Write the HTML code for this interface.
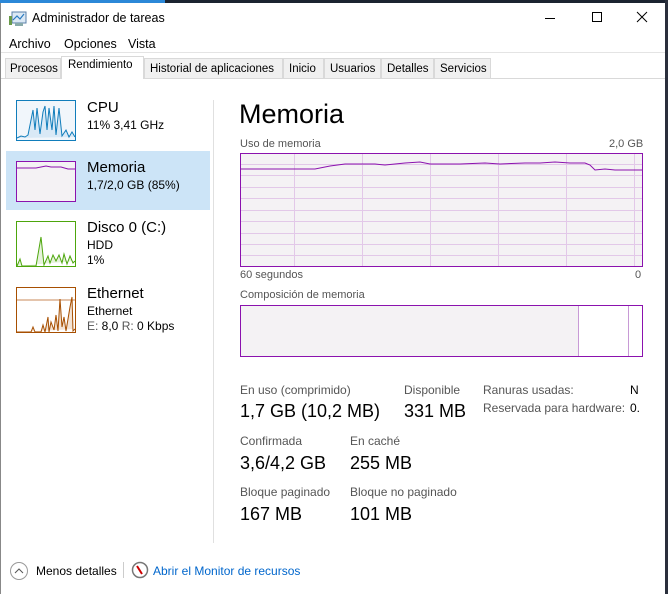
<!DOCTYPE html>
<html><head><meta charset="utf-8"><style>
*{margin:0;padding:0;box-sizing:border-box}
body{width:668px;height:594px;position:relative;overflow:hidden;background:#fff;font-family:"Liberation Sans",sans-serif;color:#000}
.a{position:absolute;white-space:nowrap}
.g{color:#555}
.t{font-size:11.5px !important}
</style></head><body>
<div class="a" style="left:0;top:0;width:668px;height:3px;background:#1b2330"></div>
<div class="a" style="left:0;top:0;width:165px;height:3px;background:#2b88d8"></div>
<div class="a" style="left:665px;top:0;width:3px;height:594px;background:#2a2f3c"></div>
<div class="a" style="left:0;top:3px;width:1px;height:591px;background:#888"></div>
<svg class="a" style="left:9px;top:11px" width="18" height="16"><rect x="3" y="1" width="14" height="11" fill="#dbe8f4" stroke="#5a7fa8"/><polyline points="4,9 8,5 11,8 15,3" fill="none" stroke="#2a7ac0" stroke-width="1.2"/><rect x="0" y="5" width="3" height="9" fill="#6a9a4a"/><rect x="6" y="12" width="8" height="3" fill="#8aa"/></svg>
<div class="a" style="left:32px;top:11px;font-size:12.5px">Administrador de tareas</div>
<div class="a" style="left:545px;top:18px;width:10px;height:1px;background:#000"></div>
<div class="a" style="left:592px;top:12px;width:10px;height:10px;border:1px solid #000"></div>
<svg class="a" style="left:636px;top:11px" width="12" height="12"><path d="M1 1L11 11M11 1L1 11" stroke="#000" stroke-width="1"/></svg>
<div class="a" style="left:9px;top:37px;font-size:12.5px">Archivo</div>
<div class="a" style="left:64px;top:37px;font-size:12.5px">Opciones</div>
<div class="a" style="left:128px;top:37px;font-size:12.5px">Vista</div>
<div class="a" style="left:1px;top:52px;width:664px;height:1px;background:#e4e4e4"></div>
<div class="a" style="left:1px;top:78px;width:664px;height:1px;background:#d9d9d9"></div>
<div class="a t" style="left:5px;top:58px;width:56px;height:21px;background:#f0f0f0;border:1px solid #d9d9d9;padding:4px 0 0 4px">Procesos</div>
<div class="a t" style="left:61px;top:56px;width:83px;height:23px;background:#fff;border:1px solid #d9d9d9;border-bottom:none;padding:2px 0 0 6px">Rendimiento</div>
<div class="a t" style="left:144px;top:58px;width:139px;height:21px;background:#f0f0f0;border:1px solid #d9d9d9;padding:4px 0 0 5px">Historial de aplicaciones</div>
<div class="a t" style="left:283px;top:58px;width:41px;height:21px;background:#f0f0f0;border:1px solid #d9d9d9;padding:4px 0 0 5px">Inicio</div>
<div class="a t" style="left:324px;top:58px;width:57px;height:21px;background:#f0f0f0;border:1px solid #d9d9d9;padding:4px 0 0 5px">Usuarios</div>
<div class="a t" style="left:381px;top:58px;width:53px;height:21px;background:#f0f0f0;border:1px solid #d9d9d9;padding:4px 0 0 5px">Detalles</div>
<div class="a t" style="left:434px;top:58px;width:57px;height:21px;background:#f0f0f0;border:1px solid #d9d9d9;padding:4px 0 0 5px">Servicios</div>
<div class="a" style="left:213px;top:100px;width:1px;height:443px;background:#e0e0e0"></div>
<div class="a" style="left:6px;top:151px;width:204px;height:59px;background:#cce4f7"></div>
<svg class="a" style="left:16px;top:100px" width="60" height="41"><rect x="0.5" y="0.5" width="59" height="40" fill="#f1f6fb" stroke="#117dbb"/><polyline points="1,38 5,36 9,37 12,35 15,20 17,10 19,30 21,8 24,34 27,12 29,6 31,30 33,8 36,30 38,6 40,35 43,8 46,36 50,30 53,37 56,32 59,37" fill="#d9e9f6" stroke="#117dbb"/></svg>
<div class="a" style="left:87px;top:99px;font-size:15px">CPU</div>
<div class="a" style="left:87px;top:118px;font-size:12px">11% 3,41 GHz</div>
<svg class="a" style="left:16px;top:161px" width="60" height="41"><rect x="0.5" y="0.5" width="59" height="40" fill="#f4f2f4" stroke="#8b12ae"/><polyline points="1,7 20,7 30,5 35,6 45,6 52,8 59,8" fill="none" stroke="#8b12ae"/></svg>
<div class="a" style="left:87px;top:159px;font-size:15px">Memoria</div>
<div class="a" style="left:87px;top:178px;font-size:12px">1,7/2,0 GB (85%)</div>
<svg class="a" style="left:16px;top:221px" width="60" height="46"><rect x="0.5" y="0.5" width="59" height="45" fill="#fff" stroke="#4da60c"/><polyline points="1,45 4,38 6,45 20,45 25,16 28,44 32,35 34,42 37,34 40,40 43,34 46,42 48,33 51,43 54,35 57,42 59,40" fill="#e6f2dc" stroke="#4da60c"/></svg>
<div class="a" style="left:87px;top:219px;font-size:15px">Disco 0 (C:)</div>
<div class="a" style="left:87px;top:238px;font-size:12px">HDD</div>
<div class="a" style="left:87px;top:253px;font-size:12px">1%</div>
<svg class="a" style="left:16px;top:287px" width="60" height="46"><rect x="0.5" y="0.5" width="59" height="45" fill="#fff" stroke="#a74f01"/><line x1="1" y1="13" x2="59" y2="13" stroke="#c98a5a"/><polyline points="1,45 15,45 17,40 19,45 25,45 27,38 29,45 32,30 33,45 35,35 38,43 40,28 42,44 44,12 46,40 48,30 50,44 54,20 56,10 57,44 59,42" fill="#f3e3d4" stroke="#a74f01"/></svg>
<div class="a" style="left:87px;top:285px;font-size:15px">Ethernet</div>
<div class="a" style="left:87px;top:304px;font-size:12px">Ethernet</div>
<div class="a" style="left:87px;top:319px;font-size:12px"><span class="g">E:</span> 8,0 <span class="g">R:</span> 0 Kbps</div>
<div class="a" style="left:239px;top:99px;font-size:27px">Memoria</div>
<div class="a g" style="left:240px;top:138px;font-size:11px">Uso de memoria</div>
<div class="a g" style="left:609px;top:138px;font-size:11px">2,0 GB</div>
<svg class="a" style="left:240px;top:153px" width="403" height="114">
<rect x="0.5" y="0.5" width="402" height="113" fill="#f4f2f4" stroke="#8b12ae"/>
<g stroke="#e2c8e8" stroke-width="1">
<line x1="1" y1="11.5" x2="402" y2="11.5"/><line x1="1" y1="22.5" x2="402" y2="22.5"/><line x1="1" y1="34.5" x2="402" y2="34.5"/><line x1="1" y1="45.5" x2="402" y2="45.5"/><line x1="1" y1="57.5" x2="402" y2="57.5"/><line x1="1" y1="68.5" x2="402" y2="68.5"/><line x1="1" y1="80.5" x2="402" y2="80.5"/><line x1="1" y1="91.5" x2="402" y2="91.5"/><line x1="1" y1="102.5" x2="402" y2="102.5"/>
<line x1="54.5" y1="1" x2="54.5" y2="113"/><line x1="122.5" y1="1" x2="122.5" y2="113"/><line x1="190.5" y1="1" x2="190.5" y2="113"/><line x1="258.5" y1="1" x2="258.5" y2="113"/><line x1="326.5" y1="1" x2="326.5" y2="113"/><line x1="394.5" y1="1" x2="394.5" y2="113"/></g>
<polyline points="1,16 75,16 90,13 105,11 135,11 145,12 165,10 180,9 190,11 220,11 245,10 260,11 285,10 300,10 315,9 330,10 345,10 350,12 355,17 365,16 375,17 400,17 402,17" fill="none" stroke="#8b12ae"/></svg>
<div class="a g" style="left:240px;top:269px;font-size:11px">60 segundos</div>
<div class="a g" style="left:635px;top:269px;font-size:11px">0</div>
<div class="a g" style="left:240px;top:289px;font-size:11px">Composición de memoria</div>
<svg class="a" style="left:240px;top:305px" width="403" height="53"><rect x="0.5" y="0.5" width="402" height="51" fill="#fff" stroke="#8b12ae"/><rect x="1" y="1" width="337" height="50" fill="#f4f2f4"/><line x1="338.5" y1="1" x2="338.5" y2="51" stroke="#c89ad6"/><line x1="388.5" y1="1" x2="388.5" y2="51" stroke="#c89ad6"/></svg>
<div class="a g" style="left:240px;top:383px;font-size:12px">En uso (comprimido)</div>
<div class="a" style="left:240px;top:401px;font-size:18px">1,7 GB (10,2 MB)</div>
<div class="a g" style="left:404px;top:383px;font-size:12px">Disponible</div>
<div class="a" style="left:404px;top:401px;font-size:18px">331 MB</div>
<div class="a g" style="left:483px;top:383px;font-size:12px">Ranuras usadas:</div>
<div class="a" style="left:630px;top:383px;font-size:12px">N</div>
<div class="a g" style="left:483px;top:401px;font-size:12px">Reservada para hardware:</div>
<div class="a" style="left:630px;top:401px;font-size:12px">0.</div>
<div class="a g" style="left:240px;top:434px;font-size:12px">Confirmada</div>
<div class="a" style="left:240px;top:453px;font-size:18px">3,6/4,2 GB</div>
<div class="a g" style="left:350px;top:434px;font-size:12px">En caché</div>
<div class="a" style="left:350px;top:453px;font-size:18px">255 MB</div>
<div class="a g" style="left:240px;top:485px;font-size:12px">Bloque paginado</div>
<div class="a" style="left:240px;top:504px;font-size:18px">167 MB</div>
<div class="a g" style="left:350px;top:485px;font-size:12px">Bloque no paginado</div>
<div class="a" style="left:350px;top:504px;font-size:18px">101 MB</div>
<svg class="a" style="left:9px;top:561px" width="20" height="20"><circle cx="10" cy="10" r="8.5" fill="none" stroke="#999"/><path d="M6 12L10 8L14 12" fill="none" stroke="#555"/></svg>
<div class="a" style="left:36px;top:564px;font-size:12px">Menos detalles</div>
<div class="a" style="left:123px;top:562px;width:1px;height:16px;background:#ccc"></div>
<svg class="a" style="left:131px;top:561px" width="18" height="18"><circle cx="9" cy="9" r="7.5" fill="#fff" stroke="#777" stroke-width="1.5"/><path d="M6 5L11 13" stroke="#c00" stroke-width="2"/></svg>
<div class="a" style="left:153px;top:564px;font-size:12px;color:#0066cc">Abrir el Monitor de recursos</div>
</body></html>
